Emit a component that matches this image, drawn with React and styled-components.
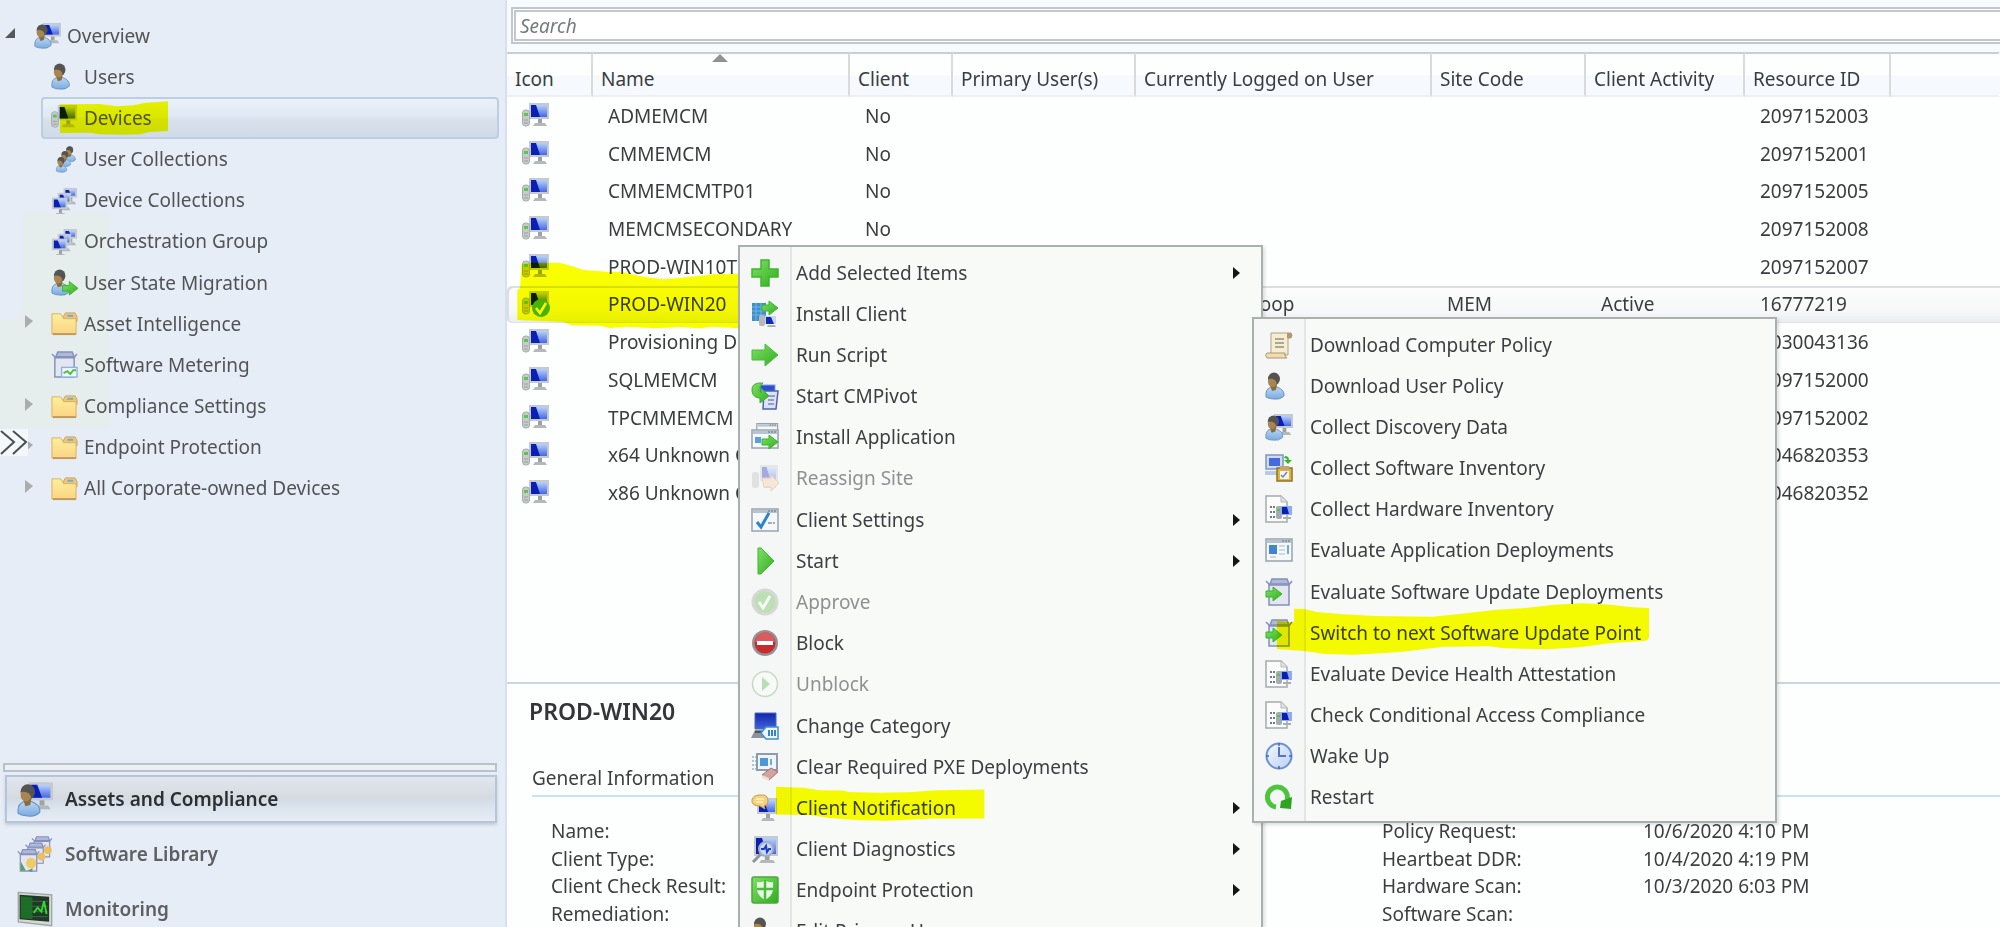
import React, { useState } from "react";
import styled, { createGlobalStyle, css } from "styled-components";

const GlobalStyle = createGlobalStyle`
  * {
    box-sizing: border-box;
  }
  body {
    margin: 0;
    overflow: hidden;
    font-family: "Noto Sans", "Open Sans", sans-serif;
    font-size: 19px;
    line-height: 26px;
    color: #3c3f40;
    background: #fdfefe;
  }
  ul {
    list-style: none;
    margin: 0;
    padding: 0;
  }
`;

const Page = styled.div`
  position: relative;
  display: flex;
  height: 100vh;
  overflow: hidden;
`;

const Sidebar = styled.aside`
  display: flex;
  flex-direction: column;
  flex: none;
  width: 507px;
  padding-top: 15px;
  border-right: 2px solid #d6e0f0;
  background:
    linear-gradient(#e5eeec, #e5eeec) 23px 213px / 86px 106px no-repeat,
    linear-gradient(#e5eeec, #e5eeec) 0 319px / 109px 109px no-repeat,
    #e6edf7;
`;

const Tree = styled.ul`
  display: grid;
  grid-auto-rows: 1fr;
  height: 494px;
`;

const TreeRow = styled.li`
  display: flex;
  align-items: stretch;
  padding-right: 6px;
`;

const Twisty = styled.span`
  display: flex;
  align-items: center;
  justify-content: flex-end;
  flex: none;
  width: ${(p) => (p.$root ? "24px" : "41px")};
  padding-right: 8px;
  padding-bottom: 4px;
`;

const TreeLink = styled.a`
  position: relative;
  display: flex;
  align-items: center;
  gap: 6px;
  flex: 1;
  padding: 0 8px;
  border: 2px solid transparent;
  border-radius: 4px;
  color: #505456;
  text-decoration: none;
  ${(p) => p.$selected && css`
    border-color: #bccfe2;
    background: linear-gradient(#eaf1f9 0%, #dfe9f4 45%, #d8e0ea 55%, #d0dbe9 100%);
  `}
`;

const Icon = styled.svg`
  display: block;
  flex: none;
  width: ${(p) => p.$size || 28}px;
  height: ${(p) => p.$size || 28}px;
  opacity: ${(p) => (p.$dim ? 0.35 : 1)};
`;

const Marker = styled.svg`
  position: absolute;
  left: ${(p) => p.$left}px;
  top: ${(p) => p.$top}px;
  fill: #fbff00;
  mix-blend-mode: multiply;
  pointer-events: none;
`;

const Expander = styled.button`
  position: absolute;
  left: 0;
  top: 429px;
  width: 28px;
  height: 27px;
  padding: 0;
  border: 0;
  background: #f4f8fb;
`;

const Nav = styled.nav`
  display: flex;
  flex-direction: column;
  gap: 7px;
  margin: auto 8px -6px 3px;
`;

const Splitter = styled.div`
  height: 9px;
  margin-bottom: -4px;
  border: 2px solid #b9c1c9;
  background: #eceff3;
`;

const NavLink = styled.a`
  display: flex;
  align-items: center;
  gap: 12px;
  height: 48px;
  margin-left: 2px;
  padding: 0 10px;
  border: 2px solid transparent;
  color: #5c6062;
  font-weight: 600;
  text-decoration: none;
  ${(p) => p.$selected && css`
    border-color: #b5c5da;
    color: #2b2f31;
    background: linear-gradient(#e2e6ec 0%, #d4dae0 50%, #d5dee8 55%, #e6edf6 100%);
    box-shadow: 0 2px 3px #c3ccd6;
  `}
`;

const Main = styled.main`
  display: flex;
  flex-direction: column;
  flex: 1;
  min-width: 0;
`;

const SearchBar = styled.div`
  flex: none;
  padding: 7px 0 8px 4px;
  background: #f7faff;
`;

const SearchInput = styled.input`
  display: block;
  width: calc(100% + 8px);
  height: 37px;
  padding: 0 4px;
  border: 5px double #c0c7cf;
  background: #fff;
  font: inherit;
  outline: 0;
  &::placeholder {
    color: #777b7d;
    font-style: italic;
    opacity: 1;
  }
`;

const ListPane = styled.section`
  position: relative;
  flex: 1;
  min-height: 0;
  overflow: hidden;
  background: #fdfefe;
`;

const Table = styled.table`
  width: 100%;
  height: 460px;
  table-layout: fixed;
  border-spacing: 0;
  color: #3a3d3e;
  white-space: nowrap;
`;

const Th = styled.th`
  position: relative;
  height: 45px;
  padding: 8px 0 0 8px;
  border-top: 2px solid #c8ced3;
  border-bottom: 2px solid #edf0f1;
  border-right: 2px solid ${(p) => (p.$last ? "transparent" : "#d8dbd9")};
  background: linear-gradient(#fdfefe 50%, #f6f9fe 55%);
  font-weight: 400;
  text-align: left;
`;

const SortMark = styled.svg`
  position: absolute;
  left: calc(50% - 9px);
  top: 0;
`;

const Td = styled.td`
  padding: 0 0 0 15px;
  overflow: hidden;
`;

const Tr = styled.tr`
  ${(p) => p.$selected && css`
    ${Td} {
      background: linear-gradient(#fdfdfd, #f6f7f8 70%, #e9edf0);
      box-shadow: inset 0 2px #dcdfe0, inset 0 -1px #dfe3e5;
    }
    ${Td}:first-child {
      border-radius: 5px 0 0 5px;
      box-shadow: inset 2px 2px #dcdfe0, inset 0 -1px #dfe3e5;
    }
  `}
`;

const Details = styled.section`
  flex: none;
  height: 245px;
  padding: 13px 0 0 22px;
  border-top: 2px solid #cfd5d9;
  background: #fdfefe;
`;

const DetailsTitle = styled.h2`
  margin: 0 0 40px;
  font-size: 23px;
  line-height: 28px;
  font-weight: 600;
  color: #333638;
`;

const DetailsColumns = styled.div`
  display: grid;
  grid-template-columns: 801px 1fr;
  gap: 30px;
  margin-left: 3px;
`;

const GroupTitle = styled.h3`
  margin: 0 0 21px;
  padding-bottom: 4px;
  border-bottom: 2px solid #c5e3f5;
  font-size: 19px;
  line-height: 26px;
  font-weight: 400;
`;

const Facts = styled.dl`
  display: grid;
  grid-template-columns: 261px 1fr;
  grid-auto-rows: 1fr;
  height: 110px;
  margin: 0 0 0 19px;
  dd {
    margin: 0;
  }
`;

const Menu = styled.ul`
  position: absolute;
  left: ${(p) => p.$left}px;
  top: ${(p) => p.$top}px;
  display: grid;
  grid-auto-rows: 1fr;
  box-sizing: content-box;
  width: 521px;
  height: ${(p) => p.$height}px;
  padding: 5px 0 3px;
  border: 2px solid #aab0ae;
  background: linear-gradient(90deg, #f5f6f6 50px, #e3e6e6 50px, #e3e6e6 52px, #f8faf8 52px);
  box-shadow: 2px 2px 3px rgba(0, 0, 0, 0.12);
`;

const MenuRow = styled.li`
  position: relative;
  display: flex;
`;

const MenuButton = styled.button`
  display: flex;
  align-items: center;
  gap: 17px;
  flex: 1;
  padding: 0 21px 0 11px;
  border: 0;
  background: none;
  color: #3c3f40;
  font: inherit;
  text-align: left;
  &:disabled {
    color: #8d9190;
  }
`;

const MenuLabel = styled.span`
  flex: 1;
`;

// shared pieces of the icons, all drawn on a 28px grid
function Screen({ x = 0, y = 0, w = 20, h = 15 }) {
  return (
    <g>
      <rect x={x} y={y} width={w} height={h} fill="#c5cace" />
      <path d={`M${x + w * 0.3} ${y + h + 4} h${w * 0.5} l2 3 h-${w * 0.5 + 4} z`} fill="#b4b8ba" />
      <rect x={x + w * 0.45} y={y + h} width={w * 0.2} height="4" fill="#9da2a5" />
      <rect x={x + 2} y={y + 2} width={w - 4} height={h - 4} fill="url(#screenLight)" />
      <path d={`M${x + 2} ${y + 2} h${w * 0.25} l${w * 0.2} ${h - 4} h-${w * 0.45} z`} fill="#0a1fb4" />
    </g>
  );
}

function Person() {
  return (
    <g>
      <path d="M1 25 Q0 17 6 15 L12 15 Q20 18 19 24 Q15 28 9 27 Q4 27 1 25z" fill="url(#shirt)" stroke="#6a94c6" />
      <path d="M5 13 h7 l-1 5 l-4 1z" fill="#8b6b3a" />
      <ellipse cx="9" cy="7" rx="6" ry="6.500" fill="#5b5a58" />
      <ellipse cx="7.500" cy="9.500" rx="4.500" ry="5.500" fill="#a98550" />
      <path d="M3 7 Q4 1 10 1 Q15 3 14 9 L12 12 Q11 6 3 7z" fill="#555452" />
    </g>
  );
}

const Arrow = ({ x = 0, y = 0 }) => (
  <path
    d={`M${x} ${y + 4} h7 v-4 l9 7 l-9 7 v-4 h-7z`}
    fill="url(#green)" stroke="#3db32c"
  />
);

const Box = () => (
  <g stroke="#8490bd" strokeWidth="1.500">
    <path d="M1 3 l5 5 M27 3 l-4 5" fill="none" />
    <path d="M7 1 h15 l2 5 h-19z" fill="#b0bad6" />
    <path d="M4 7 h20 v20 h-20z" fill="#e4e6ef" />
  </g>
);

const Report = () => (
  <g>
    <path d="M1 1 h15 l6 6 v20 h-21z" fill="#fafbfb" stroke="#a6aaab" strokeWidth="1.500" />
    <path d="M16 1 v6 h6" fill="#e0e3e5" stroke="#b3b7b9" />
    <path d="M5 12 h5 M5 17 h5 M5 22 h5" stroke="#717985" strokeWidth="2" strokeDasharray="2 1" />
    <rect x="11" y="11" width="6" height="13" rx="2" fill="#a5adb0" />
    <rect x="16" y="11" width="11" height="9" fill="#8fabf0" />
    <path d="M17 12 h5 l2 7 h-7z" fill="#0a20b4" />
    <rect x="12" y="14" width="3" height="2" fill="#50c83e" />
    <path d="M18 22 h8 v2 h-8z" fill="#a9adae" />
  </g>
);

const AppFrame = ({ y = 3, h = 22 }) => (
  <g>
    <rect x="1" y={y} width="26" height={h} fill="#f5f8fa" stroke="#98a3ae" strokeWidth="1.500" />
    <rect x="2" y={y + 1} width="24" height="3" fill="#b8c4cd" />
    <path d={`M17 ${y + 2} h8`} stroke="#617181" strokeDasharray="2 1" />
  </g>
);

const ICONS = {
  computer: (
    <>
      <Screen x={7} y={1} w={20} h={16} />
      <rect x="0.500" y="8" width="7" height="16" rx="3" fill="#c6cbca" stroke="#a6acab" />
      <path d="M2 18 h4 M2 21 h4" stroke="#9ba09f" />
      <rect x="2" y="11" width="4" height="3" fill="#57c84b" />
    </>
  ),
  userPc: (
    <>
      <Screen x={9} y={1} w={19} h={14} />
      <g transform="translate(0 2) scale(0.930)"><Person /></g>
    </>
  ),
  user: <Person />,
  users: (
    <>
      <g transform="translate(14 0) scale(0.600)"><Person /></g>
      <g transform="translate(9 5) scale(0.600)"><Person /></g>
      <g transform="translate(5 11) scale(0.600)"><Person /></g>
    </>
  ),
  devices: (
    <>
      <Screen x={13} y={1} w={14} h={10} />
      <Screen x={7} y={6} w={14} h={11} />
      <Screen x={1} y={11} w={16} h={12} />
    </>
  ),
  migrate: <><Person /><g transform="translate(0 3)"><Arrow x={12} y={10} /></g></>,
  folder: (
    <>
      <path d="M12 8 l3 -5 h10 l2 4 v5 h-15z" fill="#e8c878" stroke="#c9a563" />
      <rect x="17" y="5" width="6" height="2" fill="#7aa7d6" />
      <path d="M1 4 h9 l3 5 h13 v16 h-25z" fill="url(#folder)" stroke="#dbb062" />
      <path d="M2 25 h24" stroke="#c09a5d" strokeWidth="2" />
    </>
  ),
  metering: (
    <>
      <Box />
      <rect x="11" y="17" width="16" height="10" fill="#f3f8fd" stroke="#8fb4e3" strokeWidth="1.500" />
      <path d="M13 23 l4 -2 l3 3 l3 -4 h3" fill="none" stroke="#4cc13a" strokeWidth="2" />
    </>
  ),
  plus: <path d="M10 1 h8 v9 h9 v8 h-9 v9 h-8 v-9 h-9 v-8 h9z" fill="url(#green)" stroke="#3fb52d" strokeWidth="1.500" />,
  installClient: (
    <>
      <path d="M1 3 h14 v18 h-14z" fill="#3f8fce" />
      <path d="M1 7 h14 M1 11 h14 M1 15 h14 M5 3 v18 M10 3 v18" stroke="#74b4e2" />
      <Arrow x={11} y={1} />
      <rect x="8" y="15" width="6" height="11" rx="2" fill="#b4b9b9" />
      <rect x="14" y="16" width="11" height="8" fill="#c9d5f2" />
      <path d="M15 17 h5 l3 7 h-8z" fill="#1029bd" />
      <path d="M17 25 h7 l1 2 h-9z" fill="#aeb3b5" />
    </>
  ),
  run: <path d="M1 9 h13 v-6 l13 11 l-13 11 v-6 h-13z" fill="url(#green)" stroke="#4bbd39" />,
  pivot: (
    <>
      <rect x="9" y="3" width="15" height="14" fill="#2b4ed2" stroke="#8ba0e0" />
      <path d="M13 9 h14 l-2 18 h-13z" fill="#dce3f6" stroke="#4e63b4" strokeWidth="1.500" />
      <path d="M17 14 h7 M17 18 h6 M17 22 h6" stroke="#7c89b8" strokeWidth="1.500" />
      <path d="M12 1 Q0 0 1 9 Q2 16 9 16 v5 l9 -7 l-8 -8 v5 Q5 8 12 1z" fill="url(#green)" stroke="#43af34" />
    </>
  ),
  installApp: (
    <>
      <g transform="translate(5 -2) scale(0.800)"><AppFrame /></g>
      <AppFrame y={7} h={18} />
      <rect x="4" y="14" width="6" height="6" fill="#5c9ddc" />
      <Arrow x={11} y={12} />
    </>
  ),
  reassign: (
    <>
      <Screen x={9} y={1} w={18} h={16} />
      <rect x="1" y="8" width="7" height="16" rx="3" fill="#b9bfbd" />
      <path d="M11 14 h9 v-3 l8 8 l-8 8 v-4 h-7z" fill="#f6c9a0" stroke="#d98d55" />
    </>
  ),
  settings: (
    <>
      <AppFrame />
      <path d="M6 16 l4 5 l8 -14" fill="none" stroke="#2b84cb" strokeWidth="3" />
      <path d="M17 17 h7" stroke="#8b9398" strokeWidth="1.500" strokeDasharray="4 1" />
    </>
  ),
  start: <path d="M7 1 h3 l13 13 l-13 13 h-3z" fill="url(#green)" stroke="#3fb72e" />,
  approve: (
    <>
      <circle cx="14" cy="14" r="12" fill="#55b83c" stroke="#9aa39a" strokeWidth="3" />
      <path d="M8 14 l4 6 l7 -12" fill="none" stroke="#fff" strokeWidth="3" />
    </>
  ),
  block: (
    <>
      <circle cx="14" cy="14" r="13" fill="#909496" />
      <circle cx="14" cy="14" r="10.500" fill="#c92a2c" />
      <path d="M4 13 a10 10 0 0 1 20 0z" fill="#d95b5b" />
      <rect x="6" y="12" width="16" height="4" fill="#fff" />
    </>
  ),
  unblock: (
    <>
      <circle cx="14" cy="14" r="12.500" fill="#fff" stroke="#6cab63" strokeWidth="1.500" />
      <path d="M11 7 l8 7 l-8 7z" fill="#4cb23b" />
    </>
  ),
  category: (
    <>
      <path d="M4 1 h21 v16 h-21z" fill="url(#blue)" stroke="#4c68bb" />
      <path d="M4 18 h20 l3 8 h-27z" fill="#8d9499" />
      <path d="M4 20 h18" stroke="#4d5356" strokeWidth="2" />
      <path d="M10 21 l5 -6 h12 v12 h-12z" fill="#eef6fd" stroke="#3b91d6" strokeWidth="1.500" />
      <path d="M18 18 v6 M21 18 v6 M24 18 v6" stroke="#3b82c8" strokeWidth="2" />
    </>
  ),
  clearPxe: (
    <>
      <path d="M1 4 h5 M1 8 h5 M1 12 h5 M1 16 h5" stroke="#8fb8de" strokeWidth="1.500" strokeDasharray="2 1" />
      <rect x="6" y="1" width="20" height="16" fill="#eff4f8" stroke="#8e9caa" strokeWidth="2" />
      <rect x="9" y="5" width="8" height="8" fill="#4d97d6" />
      <path d="M20 6 v6" stroke="#78a7d3" strokeWidth="2" />
      <path d="M11 22 l9 -7 l7 4 l-9 8z" fill="#d5a39d" stroke="#9d7771" />
      <path d="M11 22 l7 3 v3 l-7 -3z" fill="#eeded9" />
    </>
  ),
  notification: (
    <>
      <Screen x={6} y={4} w={20} h={16} />
      <path d="M9 1 Q17 0 17 7 Q17 11 13 12 L14 15 L9 12 Q0 12 1 6 Q2 1 9 1z" fill="#f5d27c" stroke="#c89d49" />
      <path d="M5 5 h8 M5 8 h7" stroke="#fff2c6" strokeWidth="1.500" />
    </>
  ),
  diagnostics: (
    <>
      <Screen x={3} y={1} w={24} h={20} />
      <path d="M2 27 l8 -8" stroke="#8d949a" strokeWidth="3" />
      <circle cx="15" cy="14" r="7" fill="#c9d9fa" stroke="#a3aebf" strokeWidth="2" />
      <path d="M10 14 h3 l2 -3 l1 6 l2 -3 h2" fill="none" stroke="#1d39c4" strokeWidth="2" />
    </>
  ),
  endpoint: (
    <>
      <rect x="1" y="1" width="26" height="26" rx="2" fill="url(#green)" stroke="#4da73d" strokeWidth="1.500" />
      <path d="M6 6 Q11 7 14 4 Q17 7 22 6 V14 Q21 20 14 24 Q7 20 6 14z" fill="#eaf8e6" />
      <path d="M14 4 v20 M6 13 h16" stroke="#4bbb3a" strokeWidth="2.500" />
    </>
  ),
  editUser: <><Person /><path d="M14 22 l8 -12 l4 2 l-7 13z" fill="#d8483a" /></>,
  scroll: (
    <>
      <path d="M6 2 h20 q2 2 0 5 h-3 v17 h-17z" fill="#f6edcf" stroke="#a9a38f" />
      <path d="M22 2 h4 q2 2 0 5 h-4z" fill="#b59668" />
      <path d="M10 8 h9 M10 12 h9 M10 16 h9" stroke="#93908a" strokeWidth="1.500" />
      <path d="M2 22 h18 q-1 4 2 5 h-20 q-3 -3 0 -5z" fill="#f1dcad" stroke="#a79777" />
    </>
  ),
  softInventory: (
    <>
      <rect x="1" y="1" width="17" height="14" fill="#cfdcf4" stroke="#8094c3" strokeWidth="1.500" />
      <rect x="4" y="4" width="11" height="8" fill="#4569e2" />
      <path d="M0 17 h14 v4 h-14z" fill="#b9c9e6" />
      <path d="M20 2 q4 0 4 4 h3 l-4 4 l-4 -4 h3 q0 -2 -3 -2z" fill="#35b827" />
      <rect x="12" y="14" width="15" height="13" fill="#dfb63b" stroke="#8e7428" strokeWidth="1.500" />
      <rect x="15" y="12" width="9" height="4" fill="#c4a66a" />
      <path d="M15 17 h9 v8 h-9z" fill="#f2f4f6" />
      <path d="M16 21 l2 2 l4 -5" fill="none" stroke="#6a86b2" strokeWidth="1.500" />
    </>
  ),
  report: <Report />,
  app: (
    <>
      <AppFrame />
      <rect x="4" y="9" width="8" height="9" fill="#3f86cd" />
      <path d="M14 10 h6 M14 14 h6 M14 18 h6 M5 21 h6" stroke="#c3ced6" strokeWidth="1.500" />
      <path d="M23 9 v9" stroke="#6eaae2" strokeWidth="2" />
    </>
  ),
  boxArrow: <><Box /><Arrow x={1} y={9} /></>,
  clock: (
    <>
      <circle cx="14" cy="14" r="12.500" fill="url(#clock)" stroke="#6d8fd3" strokeWidth="2" />
      <path d="M14 5 v9 h7" fill="none" stroke="#5675bb" strokeWidth="2" />
      <path d="M14 1 v3 M14 24 v3 M1 14 h3 M24 14 h3" stroke="#4466b3" strokeWidth="1.500" />
    </>
  ),
  restart: (
    <>
      <path d="M11 24 A10 10 0 1 1 22 17" fill="none" stroke="#4cc53a" strokeWidth="5" />
      <path d="M16 18 l11 -4 l-1 12 l-11 -1z" fill="#2fa421" />
    </>
  ),
  library: (
    <>
      <g transform="translate(11 0) scale(0.600)"><Box /></g>
      <circle cx="24" cy="11" r="3" fill="#ecbf5c" />
      <g transform="translate(6 5) scale(0.600)"><Box /></g>
      <circle cx="19" cy="16" r="3" fill="#ecbf5c" />
      <g transform="translate(0 10) scale(0.640)"><Box /></g>
      <circle cx="11" cy="21" r="4" fill="#f1ca66" />
      <path d="M3 20 l4 7 h-4z M8 27 l4 -2 v3z" fill="#5f9d67" />
    </>
  ),
  monitoring: (
    <>
      <path d="M1 1 L27 3 V27 L1 24z" fill="#d5d9d4" stroke="#9ea49f" />
      <path d="M2 3 L25 4.500 V24 L2 22z" fill="#22362a" />
      <path d="M3 4 L12 5 V22 L3 21z" fill="#187022" />
      <path d="M3 8 h21 M3 12 h21 M3 16 h21 M3 20 h21" stroke="#2d6337" />
      <path d="M13 17 l3 -4 l3 3 l2 -8 l2 10" fill="none" stroke="#38d52d" strokeWidth="1.500" />
    </>
  ),
};

function Glyph({ name, size, dim }) {
  return (
    <Icon viewBox="0 0 28 28" $size={size} $dim={dim} aria-hidden="true">
      {ICONS[name]}
    </Icon>
  );
}

function Gradients() {
  return (
    <svg width="0" height="0" style={{ position: "absolute" }} aria-hidden="true">
      <defs>
        <linearGradient id="screenLight" x1="0" y1="0" x2="0" y2="1">
          <stop offset="0" stopColor="#b9d1fd" />
          <stop offset="1" stopColor="#4468e2" />
        </linearGradient>
        <linearGradient id="shirt" x1="0" y1="0" x2="0" y2="1">
          <stop offset="0" stopColor="#b9d6f3" />
          <stop offset="1" stopColor="#7aabdf" />
        </linearGradient>
        <linearGradient id="green" x1="0" y1="0" x2="1" y2="1">
          <stop offset="0" stopColor="#7fe065" />
          <stop offset="1" stopColor="#30ae20" />
        </linearGradient>
        <linearGradient id="folder" x1="0" y1="0" x2="0" y2="1">
          <stop offset="0" stopColor="#fdf09a" />
          <stop offset="1" stopColor="#fbd483" />
        </linearGradient>
        <linearGradient id="blue" x1="0" y1="0" x2="0" y2="1">
          <stop offset="0" stopColor="#1325a8" />
          <stop offset="1" stopColor="#3f63db" />
        </linearGradient>
        <linearGradient id="clock" x1="0" y1="0" x2="1" y2="1">
          <stop offset="0" stopColor="#f3f8ff" />
          <stop offset="1" stopColor="#b9d0f5" />
        </linearGradient>
      </defs>
    </svg>
  );
}

const tree = [
  { label: "Users", icon: "user" },
  { label: "Devices", icon: "computer" },
  { label: "User Collections", icon: "users" },
  { label: "Device Collections", icon: "devices" },
  { label: "Orchestration Group", icon: "devices" },
  { label: "User State Migration", icon: "migrate" },
  { label: "Asset Intelligence", icon: "folder", branch: true },
  { label: "Software Metering", icon: "metering" },
  { label: "Compliance Settings", icon: "folder", branch: true },
  { label: "Endpoint Protection", icon: "folder", branch: true },
  { label: "All Corporate-owned Devices", icon: "folder", branch: true },
];

const workspaces = [
  { label: "Assets and Compliance", icon: "userPc" },
  { label: "Software Library", icon: "library" },
  { label: "Monitoring", icon: "monitoring" },
];

const columns = [
  { label: "Icon", width: 86 },
  { label: "Name", width: 257 },
  { label: "Client", width: 103 },
  { label: "Primary User(s)", width: 183 },
  { label: "Currently Logged on User", width: 296 },
  { label: "Site Code", width: 154 },
  { label: "Client Activity", width: 159 },
  { label: "Resource ID", width: 146 },
];

const devices = [
  { name: "ADMEMCM", client: "No", id: "2097152003" },
  { name: "CMMEMCM", client: "No", id: "2097152001" },
  { name: "CMMEMCMTP01", client: "No", id: "2097152005" },
  { name: "MEMCMSECONDARY", client: "No", id: "2097152008" },
  { name: "PROD-WIN10TP", client: "No", id: "2097152007" },
  { name: "PROD-WIN20", client: "Yes", user: "MEMCM\\janoop", site: "MEM", activity: "Active", id: "16777219" },
  { name: "Provisioning Device", client: "No", id: "2030043136" },
  { name: "SQLMEMCM", client: "No", id: "2097152000" },
  { name: "TPCMMEMCM", client: "No", id: "2097152002" },
  { name: "x64 Unknown Computer", client: "No", id: "2046820353" },
  { name: "x86 Unknown Computer", client: "No", id: "2046820352" },
];

const actions = [
  { label: "Add Selected Items", icon: "plus", sub: true },
  { label: "Install Client", icon: "installClient" },
  { label: "Run Script", icon: "run" },
  { label: "Start CMPivot", icon: "pivot" },
  { label: "Install Application", icon: "installApp" },
  { label: "Reassign Site", icon: "reassign", disabled: true },
  { label: "Client Settings", icon: "settings", sub: true },
  { label: "Start", icon: "start", sub: true },
  { label: "Approve", icon: "approve", disabled: true },
  { label: "Block", icon: "block" },
  { label: "Unblock", icon: "unblock", disabled: true },
  { label: "Change Category", icon: "category" },
  { label: "Clear Required PXE Deployments", icon: "clearPxe" },
  { label: "Client Notification", icon: "notification", sub: true },
  { label: "Client Diagnostics", icon: "diagnostics", sub: true },
  { label: "Endpoint Protection", icon: "endpoint", sub: true },
  { label: "Edit Primary Users", icon: "editUser" },
];

const notifications = [
  { label: "Download Computer Policy", icon: "scroll" },
  { label: "Download User Policy", icon: "user" },
  { label: "Collect Discovery Data", icon: "userPc" },
  { label: "Collect Software Inventory", icon: "softInventory" },
  { label: "Collect Hardware Inventory", icon: "report" },
  { label: "Evaluate Application Deployments", icon: "app" },
  { label: "Evaluate Software Update Deployments", icon: "boxArrow" },
  { label: "Switch to next Software Update Point", icon: "boxArrow" },
  { label: "Evaluate Device Health Attestation", icon: "report" },
  { label: "Check Conditional Access Compliance", icon: "report" },
  { label: "Wake Up", icon: "clock" },
  { label: "Restart", icon: "restart" },
];

const general = ["Name:", "Client Type:", "Client Check Result:", "Remediation:"];

const activity = [
  ["Policy Request:", "10/6/2020 4:10 PM"],
  ["Heartbeat DDR:", "10/4/2020 4:19 PM"],
  ["Hardware Scan:", "10/3/2020 6:03 PM"],
  ["Software Scan:", ""],
];

// felt-tip strokes over the three steps and the chosen device
const markers = {
  "Client Notification": (
    <Marker $left={36} $top={-1} width="209" height="35" viewBox="134 855 608 107" preserveAspectRatio="none">
      <path d="M134 857 L215 860 L260 868 L330 869 L345 873 L430 876 L520 874 L600 868 L740 866 V954 L590 954 L460 961 L380 960 L290 953 L230 944 L134 942z" />
    </Marker>
  ),
  "Switch to next Software Update Point": (
    <Marker $left={23} $top={-9} width="372" height="52" viewBox="104 220 1042 156" preserveAspectRatio="none">
      <path d="M152 237 L180 238 L215 247 L290 254 L380 259 L540 261 L620 252 L720 240 L800 235 L880 225 L960 221 L1040 225 L1100 233 L1146 235 V320 Q1146 334 1130 334 L1040 340 L950 353 L860 359 L740 356 L700 350 L570 351 L450 367 L320 375 L240 373 L180 364 L104 358 V275 L152 278z" />
    </Marker>
  ),
};

function MenuList({ items, left, top, height }) {
  return (
    <Menu $left={left} $top={top} $height={height}>
      {items.map((item) => (
        <MenuRow key={item.label}>
          <MenuButton type="button" disabled={item.disabled}>
            <Glyph name={item.icon} dim={item.disabled} />
            <MenuLabel>{item.label}</MenuLabel>
            {item.sub && (
              <svg width="7" height="12" viewBox="0 0 7 12" aria-hidden="true">
                <path d="M0 0 L7 6 L0 12z" fill="#151515" />
              </svg>
            )}
          </MenuButton>
          {markers[item.label]}
        </MenuRow>
      ))}
    </Menu>
  );
}

function App() {
  const [selected, setSelected] = useState("PROD-WIN20");

  return (
    <Page>
      <GlobalStyle />
      <Gradients />
      <Sidebar>
        <Tree>
          <TreeRow>
            <Twisty $root>
              <svg width="11" height="11" viewBox="0 0 11 11" aria-hidden="true">
                <path d="M10 0 V10 H0z" fill="#55585a" />
              </svg>
            </Twisty>
            <TreeLink href="#overview">
              <Glyph name="userPc" size={27} />
              Overview
            </TreeLink>
          </TreeRow>
          {tree.map((node) => (
            <TreeRow key={node.label}>
              <Twisty>
                {node.branch && (
                  <svg width="8" height="13" viewBox="0 0 8 13" aria-hidden="true">
                    <path d="M0 0 L8 6 L0 13z" fill="#a9adae" />
                  </svg>
                )}
              </Twisty>
              <TreeLink href="#node" $selected={node.label === "Devices"}>
                <Glyph name={node.icon} size={27} />
                {node.label}
                {node.label === "Devices" && (
                  <Marker $left={17} $top={2} width="108" height="34" viewBox="180 300 325 102" preserveAspectRatio="none">
                    <path d="M180 310 L300 309 L350 316 L400 313 L440 305 L505 301 V390 L450 393 L420 400 L380 401 L300 400 L270 395 L180 396z" />
                  </Marker>
                )}
              </TreeLink>
            </TreeRow>
          ))}
        </Tree>
        <Nav>
          <Splitter />
          {workspaces.map((item, i) => (
            <NavLink key={item.label} href="#workspace" $selected={i === 0}>
              <Glyph name={item.icon} size={36} />
              {item.label}
            </NavLink>
          ))}
        </Nav>
      </Sidebar>

      <Main>
        <SearchBar>
          <SearchInput type="text" placeholder="Search" aria-label="Search" />
        </SearchBar>
        <ListPane>
          <Table>
            <colgroup>
              {columns.map((col) => <col key={col.label} width={col.width} />)}
              <col />
            </colgroup>
            <thead>
              <tr>
                {columns.map((col) => (
                  <Th key={col.label}>
                    {col.label}
                    {col.label === "Name" && (
                      <SortMark width="16" height="8" viewBox="0 0 16 8" aria-hidden="true">
                        <path d="M0 8 L8 0 L16 8z" fill="#8f9394" />
                      </SortMark>
                    )}
                  </Th>
                ))}
                <Th $last aria-hidden="true" />
              </tr>
            </thead>
            <tbody>
              {devices.map((device) => (
                <Tr
                  key={device.name}
                  $selected={device.name === selected}
                  onClick={() => setSelected(device.name)}
                >
                  <Td>
                    {device.site ? (
                      <Icon viewBox="0 0 28 28" aria-hidden="true">
                        {ICONS.computer}
                        <circle cx="19" cy="18" r="9" fill="#48b51c" />
                        <path d="M14 18 l4 5 l6 -10" fill="none" stroke="#fff" strokeWidth="2.500" />
                      </Icon>
                    ) : (
                      <Glyph name="computer" />
                    )}
                  </Td>
                  <Td>{device.name}</Td>
                  <Td>{device.client}</Td>
                  <Td />
                  <Td>{device.user}</Td>
                  <Td>{device.site}</Td>
                  <Td>{device.activity}</Td>
                  <Td>{device.id}</Td>
                  <Td />
                </Tr>
              ))}
            </tbody>
          </Table>
          <Marker $left={10} $top={210} width="222" height="67" viewBox="51 66 666 201" preserveAspectRatio="none">
            <path d="M65 72 L100 68 L180 69 L215 78 L250 90 L320 95 L370 97 L430 110 L490 118 L560 112 L640 103 L717 101 V265 L640 260 L600 265 L540 261 L470 265 L380 260 L330 264 L300 257 L215 256 L190 246 L120 243 L52 240 V150 L60 145z" />
          </Marker>
        </ListPane>
        <Details>
          <DetailsTitle>PROD-WIN20</DetailsTitle>
          <DetailsColumns>
            <section>
              <GroupTitle>General Information</GroupTitle>
              <Facts>
                {general.map((label) => (
                  <React.Fragment key={label}>
                    <dt>{label}</dt>
                    <dd />
                  </React.Fragment>
                ))}
              </Facts>
            </section>
            <section>
              <GroupTitle>Client Activity</GroupTitle>
              <Facts>
                {activity.map(([label, value]) => (
                  <React.Fragment key={label}>
                    <dt>{label}</dt>
                    <dd>{value}</dd>
                  </React.Fragment>
                ))}
              </Facts>
            </section>
          </DetailsColumns>
        </Details>
      </Main>

      <Expander type="button" aria-label="Expand pane">
        <svg width="28" height="27" viewBox="0 0 28 27" aria-hidden="true">
          <path d="M1 2 L14 13 L1 25 M13 2 L26 13 L13 25" fill="none" stroke="#4b4f51" strokeWidth="2" />
        </svg>
      </Expander>
      <MenuList items={actions} left={738} top={245} height={700} />
      <MenuList items={notifications} left={1252} top={317} height={494} />
    </Page>
  );
}

export default App;
